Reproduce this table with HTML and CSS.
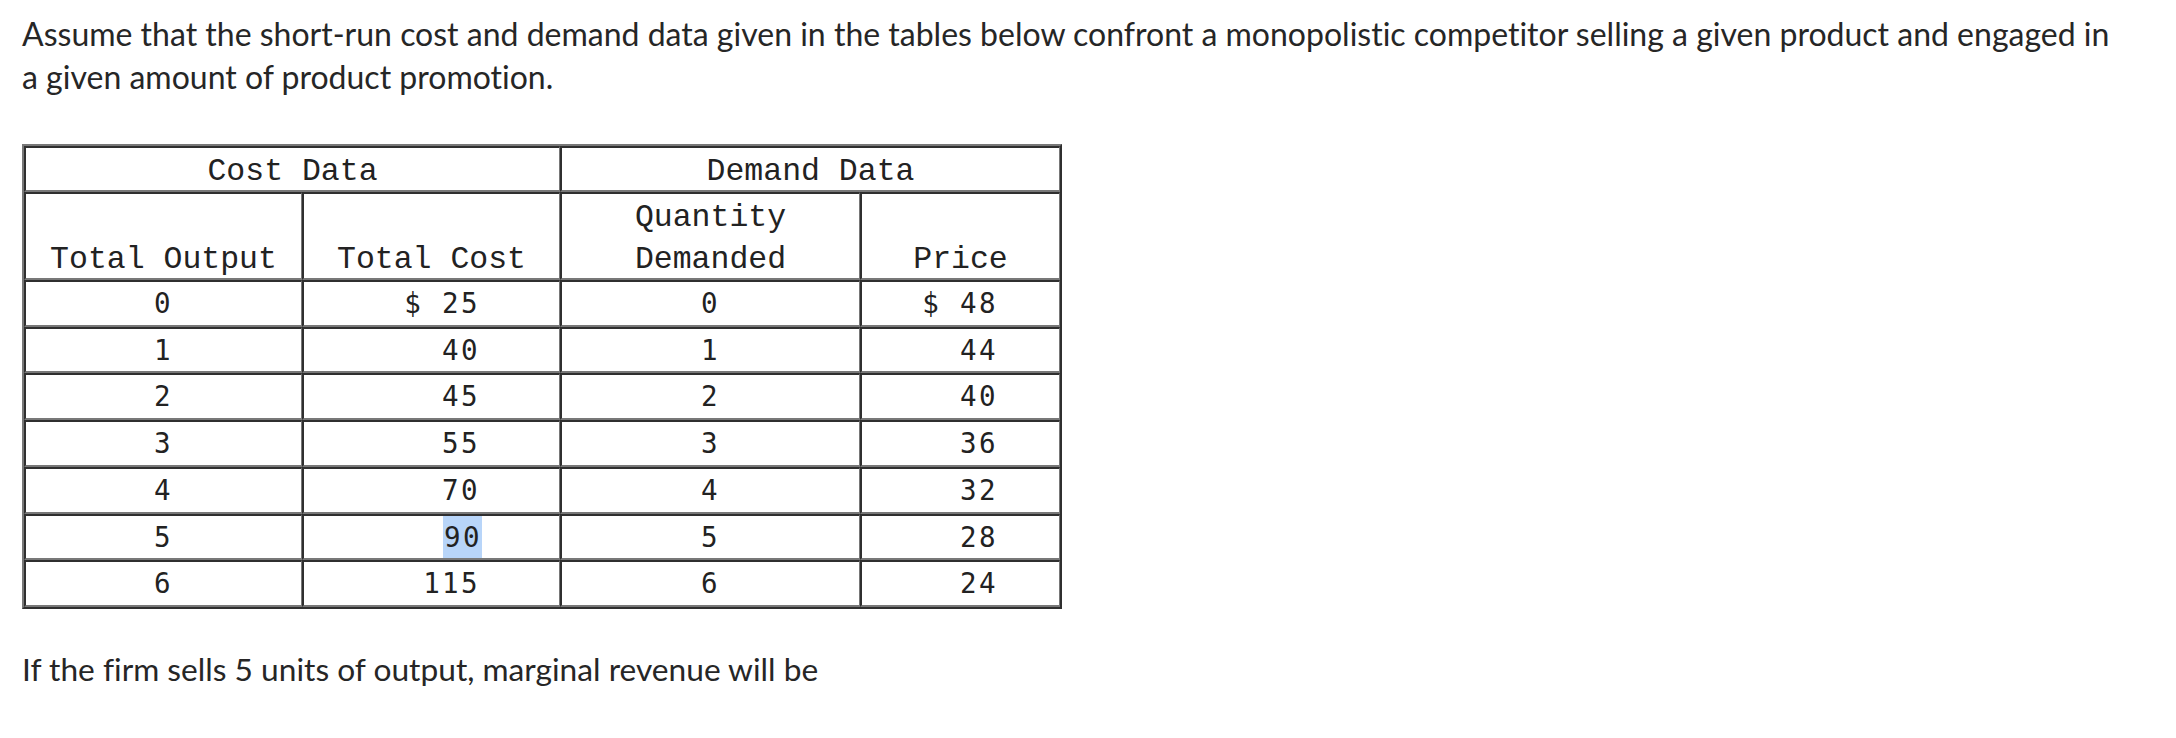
FILE: index.html
```html
<!DOCTYPE html>
<html>
<head>
<meta charset="utf-8">
<link rel="stylesheet" href="styles.css">
</head>
<body>
<div class="page">
  <p class="lead">Assume that the short-run cost and demand data given in the tables below confront a monopolistic competitor selling a given product and engaged in a given amount of product promotion.</p>
  <table class="data">
    <colgroup>
      <col class="c1"><col class="c2"><col class="c3"><col class="c4">
    </colgroup>
    <tr class="top">
      <th colspan="2"><span class="hd">Cost Data</span></th>
      <th colspan="2"><span class="hd">Demand Data</span></th>
    </tr>
    <tr class="sub">
      <th><span class="hd">Total Output</span></th>
      <th><span class="hd">Total Cost</span></th>
      <th><span class="hd">Quantity Demanded</span></th>
      <th><span class="hd">Price</span></th>
    </tr>
    <tr><td>0</td><td class="r2">$ 25</td><td>0</td><td class="r4">$ 48</td></tr>
    <tr><td>1</td><td class="r2">40</td><td>1</td><td class="r4">44</td></tr>
    <tr><td>2</td><td class="r2">45</td><td>2</td><td class="r4">40</td></tr>
    <tr><td>3</td><td class="r2">55</td><td>3</td><td class="r4">36</td></tr>
    <tr><td>4</td><td class="r2">70</td><td>4</td><td class="r4">32</td></tr>
    <tr><td>5</td><td class="r2"><span class="sel">90</span></td><td>5</td><td class="r4">28</td></tr>
    <tr><td>6</td><td class="r2">115</td><td>6</td><td class="r4">24</td></tr>
  </table>
  <p class="question">If the firm sells 5 units of output, marginal revenue will be</p>
</div>
</body>
</html>
```
FILE: styles.css
```css
html, body {
  margin: 0;
  padding: 0;
  background: #ffffff;
}

.page {
  padding: 12px 0 0 22px;
  font-family: Lato, "Open Sans", sans-serif;
  color: #262626;
  font-variant-ligatures: none;
}

.lead {
  margin: 0;
  max-width: 2100px;
  font-size: 32px;
  line-height: 43px;
}

.question {
  margin: 39px 0 0 0;
  font-size: 31.7px;
  line-height: 43px;
}

.data {
  margin-top: 46px;
  width: 1040px;
  table-layout: fixed;
  border-collapse: separate;
  border-spacing: 0;
  border-style: solid;
  border-width: 2px;
  border-color: #787878 #2f2f2f #2f2f2f #787878;
  color: #222222;
}

.c1 { width: 278px; }
.c2 { width: 258px; }
.c3 { width: 300px; }
.c4 { width: 200px; }

.data th,
.data td {
  padding: 0;
  border-style: solid;
  border-width: 2px 1px 2px 2px;
  border-color: #2f2f2f #787878 #787878 #2f2f2f;
  text-align: center;
}

.data th {
  font-family: "Liberation Mono", "Courier New", monospace;
  font-weight: normal;
  font-size: 31.5px;
  line-height: 42px;
}

.hd {
  line-height: 34px;
  vertical-align: -3px;
}

.sub th {
  vertical-align: bottom;
}

.data td {
  font-family: "DejaVu Sans Mono", monospace;
  font-size: 27.5px;
  letter-spacing: 2.4px;
  line-height: 42.7px;
  height: 42.7px;
}

.data td.r2 {
  text-align: right;
  padding-right: 79px;
}

.data td.r4 {
  text-align: right;
  padding-right: 61px;
}

.sel {
  display: inline-block;
  background: #b8d5f9;
  line-height: 42.7px;
  padding-left: 1px;
  margin-right: -2.4px;
  padding-right: 0.4px;
}
```
